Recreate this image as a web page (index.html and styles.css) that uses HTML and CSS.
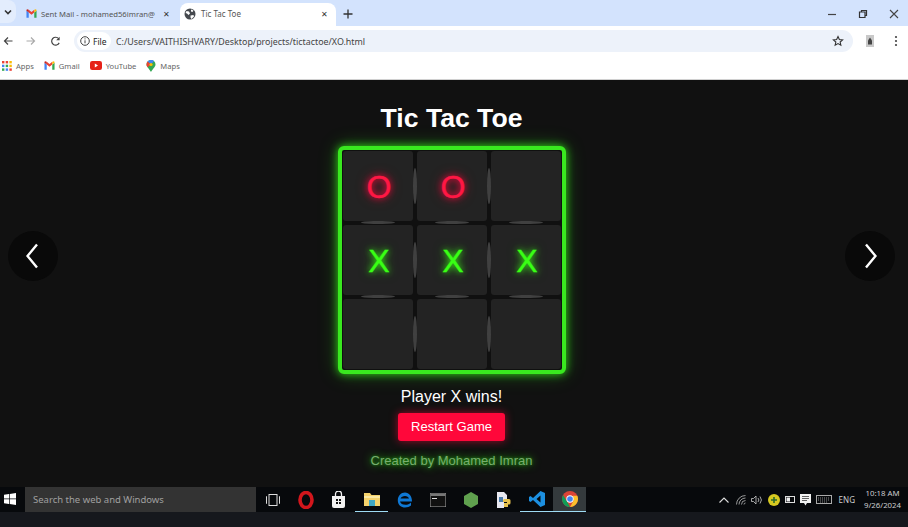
FILE: index.html
```html
<!DOCTYPE html>
<html lang="en">
<head>
  <meta charset="UTF-8">
  <meta name="viewport" content="width=device-width, initial-scale=1.0">
  <title>Tic Tac Toe</title>
  <link rel="stylesheet" href="styles.css">
</head>
<body>
  <div class="tabstrip">
    <div class="tab-search"><svg width="10" height="10" viewBox="0 0 10 10"><path d="M2 3.500l3 3 3-3" fill="none" stroke="#333" stroke-width="1.600"/></svg></div>
    <div class="tab tab-mail">
      <svg class="fav" width="11" height="11" viewBox="0 0 24 24"><path fill="#4285f4" d="M1 21h5V10L1 6z"/><path fill="#34a853" d="M18 21h5V6l-5 4z"/><path fill="#ea4335" d="M6 10l6 4.500 6-4.500V4l-6 4.500L6 4z"/><path fill="#c5221f" d="M1 6l5 4V4L3.500 3C2 2.500 1 4 1 6z"/><path fill="#fbbc04" d="M23 6l-5 4V4l2.500-1C22 2.500 23 4 23 6z"/></svg>
      <span class="tab-title">Sent Mail - mohamed56imran@</span>
      <span class="tab-x">✕</span>
    </div>
    <div class="tab tab-active">
      <svg class="fav" width="12" height="12" viewBox="0 0 24 24"><circle cx="12" cy="12" r="11" fill="#45494e"/><path fill="#fff" d="M5 6l5 1 2 4-3 3-3-3-3-1zM14 3l5 2-2 3-3-1zM13 15l6-1 1 3-5 5-2-3z"/></svg>
      <span class="tab-title">Tic Tac Toe</span>
      <span class="tab-x">✕</span>
    </div>
    <div class="tab-new">
      <svg width="10" height="10" viewBox="0 0 10 10"><path d="M5 .5v9M.5 5h9" stroke="#333" stroke-width="1.300"/></svg>
    </div>
    <div class="win-controls">
      <svg width="10" height="10" viewBox="0 0 10 10"><path d="M1 5.500h8" stroke="#444" stroke-width="1.200"/></svg>
      <svg width="10" height="10" viewBox="0 0 10 10"><path d="M1.500 3h5.500v5.500h-5.500zM3.500 3v-1.500h5v5h-1.500" fill="none" stroke="#333" stroke-width="1.200"/></svg>
      <svg width="10" height="10" viewBox="0 0 10 10"><path d="M1 1l8 8M9 1l-8 8" stroke="#444" stroke-width="1.100"/></svg>
    </div>
  </div>

  <div class="toolbar">
    <svg class="nav-btn" width="10" height="10" viewBox="0 0 10 10"><path d="M9.500 5h-8M5 1.500L1.500 5 5 8.500" fill="none" stroke="#444" stroke-width="1.200"/></svg>
    <svg class="nav-btn" width="10" height="10" viewBox="0 0 10 10"><path d="M.5 5h8M5 1.500L8.500 5 5 8.500" fill="none" stroke="#aaa" stroke-width="1.200"/></svg>
    <svg class="nav-btn" width="11" height="11" viewBox="0 0 12 12"><path d="M10 7.500A4.300 4.300 0 1 1 9.500 3" fill="none" stroke="#444" stroke-width="1.300"/><path d="M10.500 .8v3.700H6.800z" fill="#444"/></svg>
    <div class="omnibox">
      <div class="file-chip">
        <svg width="10" height="10" viewBox="0 0 10 10"><circle cx="5" cy="5" r="4.300" fill="none" stroke="#444"/><path d="M5 4.300v3M5 2.400v1" stroke="#444"/></svg>
        <span>File</span>
      </div>
      <span class="url">C:/Users/VAITHISHVARY/Desktop/projects/tictactoe/XO.html</span>
      <svg class="star" width="12" height="12" viewBox="0 0 24 24"><path d="M12 3l2.700 6 6.500.700-4.900 4.300 1.400 6.500L12 17.200 6.300 20.500l1.400-6.500L2.800 9.700 9.300 9z" fill="none" stroke="#333" stroke-width="2.200"/></svg>
    </div>
    <svg class="ext" width="8" height="12" viewBox="0 0 8 12"><rect width="8" height="12" fill="#c9c9c9"/><path d="M4 2.500l2 3v4H2v-4z" fill="#444"/></svg>
    <svg class="menu" width="4" height="12" viewBox="0 0 4 12"><circle cx="2" cy="2" r="1.100" fill="#444"/><circle cx="2" cy="6" r="1.100" fill="#444"/><circle cx="2" cy="10" r="1.100" fill="#444"/></svg>
  </div>

  <div class="bookmarks">
    <div class="bookmark">
      <svg width="10" height="10" viewBox="0 0 10 10">
        <rect width="2.400" height="2.400" fill="#ea4335"/><rect x="3.700" width="2.400" height="2.400" fill="#ea4335"/><rect x="7.400" width="2.400" height="2.400" fill="#fbbc04"/>
        <rect y="3.700" width="2.400" height="2.400" fill="#4285f4"/><rect x="3.700" y="3.700" width="2.400" height="2.400" fill="#34a853"/><rect x="7.400" y="3.700" width="2.400" height="2.400" fill="#fbbc04"/>
        <rect y="7.400" width="2.400" height="2.400" fill="#34a853"/><rect x="3.700" y="7.400" width="2.400" height="2.400" fill="#4285f4"/><rect x="7.400" y="7.400" width="2.400" height="2.400" fill="#ea4335"/>
      </svg>
      <span>Apps</span>
    </div>
    <div class="bookmark">
      <svg width="11" height="11" viewBox="0 0 24 24"><path fill="#4285f4" d="M1 21h5V10L1 6z"/><path fill="#34a853" d="M18 21h5V6l-5 4z"/><path fill="#ea4335" d="M6 10l6 4.500 6-4.500V4l-6 4.500L6 4z"/><path fill="#c5221f" d="M1 6l5 4V4L3.500 3C2 2.500 1 4 1 6z"/><path fill="#fbbc04" d="M23 6l-5 4V4l2.500-1C22 2.500 23 4 23 6z"/></svg>
      <span>Gmail</span>
    </div>
    <div class="bookmark">
      <svg width="12" height="9" viewBox="0 0 12 9"><rect width="12" height="9" rx="2.200" fill="#e62117"/><path d="M4.800 2.500L8 4.500 4.800 6.500z" fill="#fff"/></svg>
      <span>YouTube</span>
    </div>
    <div class="bookmark">
      <svg width="10" height="12" viewBox="0 0 10 12"><path d="M5 0a4.500 4.500 0 0 1 4.500 4.500C9.500 7 6.500 9 5 12 3.500 9 .5 7 .5 4.500A4.500 4.500 0 0 1 5 0z" fill="#34a853"/><path d="M1.500 1.500L5 4.500 8 1A4.500 4.500 0 0 0 5 0a4.500 4.500 0 0 0-3.500 1.500z" fill="#4285f4"/><path d="M.5 4.500c0 1 .5 2 1 2.700L5 4.500 1.500 1.500A4.500 4.500 0 0 0 .5 4.500z" fill="#ea4335"/><circle cx="5" cy="4.500" r="1.600" fill="#fbbc04"/></svg>
      <span>Maps</span>
    </div>
  </div>

  <main class="game">
    <h1 class="title">Tic Tac Toe</h1>
    <div class="board">
      <div class="cell cell-o">O</div>
      <div class="cell cell-o">O</div>
      <div class="cell"></div>
      <div class="cell cell-x">X</div>
      <div class="cell cell-x">X</div>
      <div class="cell cell-x">X</div>
      <div class="cell"></div>
      <div class="cell"></div>
      <div class="cell"></div>
    </div>
    <p class="status">Player X wins!</p>
    <button class="restart" type="button">Restart Game</button>
    <p class="credit">Created by Mohamed Imran</p>

    <div class="arrow arrow-left"><svg width="14" height="26" viewBox="0 0 14 26"><path d="M11 1.500L1.500 13 11 24.500" fill="none" stroke="#fff" stroke-width="2.400"/></svg></div>
    <div class="arrow arrow-right"><svg width="14" height="26" viewBox="0 0 14 26"><path d="M3 1.500L12.500 13 3 24.500" fill="none" stroke="#fff" stroke-width="2.400"/></svg></div>
  </main>

  <footer class="taskbar">
    <svg class="start" width="12" height="12" viewBox="0 0 12 12"><path fill="#fff" d="M0 1.800l5-.7v4.500H0zM5.700 1l6.300-1v5.600H5.700zM0 6.300h5v4.600l-5-.7zM5.700 6.300H12V12l-6.300-1z"/></svg>
    <div class="search">Search the web and Windows</div>
    <div class="task-icons">
      <div class="task"><svg width="14" height="12" viewBox="0 0 14 12"><rect x="3" y=".5" width="8" height="11" fill="none" stroke="#ddd"/><path d="M1 2.500H.5v7H1M13 2.500h.5v7H13" fill="none" stroke="#ddd"/></svg></div>
      <div class="task"><svg width="16" height="18" viewBox="0 0 16 18"><ellipse cx="8" cy="9" rx="6" ry="7.500" fill="none" stroke="#d2161c" stroke-width="3.600"/></svg></div>
      <div class="task"><svg width="15" height="17" viewBox="0 0 15 17"><path d="M1 5h13v10a2 2 0 0 1-2 2H3a2 2 0 0 1-2-2z" fill="#f2f2f2"/><path d="M4.500 5V3a3 3 0 0 1 6 0v2" fill="none" stroke="#f2f2f2" stroke-width="1.300"/><path fill="#111" d="M5 8h2v2H5zM8 8h2v2H8zM5 11h2v2H5zM8 11h2v2H8z"/></svg></div>
      <div class="task task-open"><svg width="16" height="14" viewBox="0 0 16 14"><path d="M0 1h6l1.500 2H16v11H0z" fill="#f4d26c"/><rect x="0" y="4" width="16" height="2" fill="#fbe9a4"/><rect x="5" y="8" width="6" height="6" fill="#3fa7c4"/></svg></div>
      <div class="task"><svg width="16" height="16" viewBox="0 0 16 16"><path d="M3 9.500h12C15 4 12 .5 8 .5 4 .5.800 4 .8 8.500c0 4.500 3.500 7 7.200 7 2.500 0 4.500-.8 6-2V10.500c-1.500 1.500-3.500 2.300-5.500 2.300-3 0-5-1.300-5.500-3.300zM3.500 6.500C4 5 6 4 8 4s3.500 1 4 2.500z" fill="#0f78d4"/></svg></div>
      <div class="task"><svg width="16" height="14" viewBox="0 0 16 14"><rect width="16" height="14" fill="#111" stroke="#aaa"/><rect x=".5" y=".5" width="15" height="2.500" fill="#777"/><path d="M2 5.500h5" stroke="#ddd"/></svg></div>
      <div class="task"><svg width="14" height="16" viewBox="0 0 14 16"><path d="M7 0l7 4v8l-7 4-7-4V4z" fill="#5fa04e"/></svg></div>
      <div class="task"><svg width="16" height="16" viewBox="0 0 16 16"><path d="M1 0h7l3 3v6H8v7H1z" fill="#e8e8f0"/><path d="M10 7h3a1.500 1.500 0 0 1 1.500 1.500V11a1.500 1.500 0 0 1-1.500 1.500h-1V15H8v-4h3v-1H7V8.500A1.500 1.500 0 0 1 8.500 7z" fill="#e7c24e"/><rect x="3" y="5" width="4" height="5" fill="#4b7cab"/></svg></div>
      <div class="task task-open"><svg width="16" height="16" viewBox="0 0 16 16"><path d="M11.500 0L16 2v12l-4.500 2L4 9l-2.500 2L0 10V6l1.500-1L4 7zM11.500 4.500L7.500 8l4 3.500z" fill="#1c8fe0"/></svg></div>
      <div class="task task-open task-active"><svg width="16" height="16" viewBox="0 0 16 16"><circle cx="8" cy="8" r="8" fill="#db4437"/><path d="M8 16a8 8 0 0 1-6.900-12L5 10.500 8 16z" fill="#0f9d58"/><path d="M15.300 4.700A8 8 0 0 1 8 16l3.400-6-.4-5.300z" fill="#fbc02d"/><circle cx="8" cy="8" r="3.700" fill="#fff"/><circle cx="8" cy="8" r="2.800" fill="#4285f4"/></svg></div>
    </div>
    <div class="tray">
      <svg class="tray-up" width="10" height="6" viewBox="0 0 10 6"><path d="M.5 5.500L5 1l4.500 4.500" fill="none" stroke="#ddd" stroke-width="1.100"/></svg>
      <svg width="10" height="10" viewBox="0 0 10 10"><path d="M.5 9.500A9 9 0 0 1 9.500 .5M3 9.500A6.500 6.500 0 0 1 9.500 3M5.500 9.500a4 4 0 0 1 4-4M8 9.500a1.500 1.500 0 0 1 1.500-1.500" fill="none" stroke="#bbb" stroke-width=".8"/></svg>
      <svg width="12" height="10" viewBox="0 0 12 10"><path d="M.5 3.500h2L5 1v8L2.500 6.500h-2z" fill="none" stroke="#ccc" stroke-width=".8"/><path d="M7 3a3 3 0 0 1 0 4M9 1.500a5.500 5.500 0 0 1 0 7" fill="none" stroke="#ccc" stroke-width=".8"/></svg>
      <svg width="12" height="12" viewBox="0 0 12 12"><circle cx="6" cy="6" r="6" fill="#d7c921"/><path d="M6 3v6M3 6h6" stroke="#2d6a2d" stroke-width="1.600"/></svg>
      <svg width="10" height="7" viewBox="0 0 10 7"><rect x=".5" y=".5" width="9" height="6" fill="none" stroke="#ddd"/><rect x="1.500" y="1.500" width="3.500" height="4" fill="#eee"/></svg>
      <svg width="11" height="12" viewBox="0 0 11 12"><path d="M0 0h11v9H7l-1.500 2.500L4 9H0z" fill="#f2f2f2"/><path d="M2 2.500h7M2 4.500h7M2 6.500h5" stroke="#222" stroke-width=".7"/></svg>
      <svg width="16" height="9" viewBox="0 0 16 9"><rect x=".5" y=".5" width="15" height="8" fill="none" stroke="#aaa"/><path d="M2 3h12M2 5h12M4 7h8" stroke="#aaa" stroke-dasharray="1 1" stroke-width=".8"/></svg>
      <span class="lang">ENG</span>
      <div class="clock"><span>10:18 AM</span><span>9/26/2024</span></div>
    </div>
  </footer>
</body>
</html>
```

FILE: styles.css
```css
* {
  box-sizing: border-box;
}

body {
  margin: 0;
  width: 908px;
  height: 527px;
  overflow: hidden;
  display: flex;
  flex-direction: column;
  font-family: "Liberation Sans", Arial, sans-serif;
  background-color: #111;
}

/* browser chrome */
.tabstrip {
  height: 26px;
  flex: none;
  display: flex;
  align-items: flex-end;
  background-color: #d3e3fd;
  font-family: "Noto Sans", sans-serif;
  font-size: 8px;
  color: #555;
}

.tab-search {
  width: 16px;
  height: 23px;
  margin-right: 2px;
  display: flex;
  align-items: center;
  justify-content: center;
  background-color: #e3edfd;
  border-radius: 0 8px 8px 0;
  align-self: flex-start;
}

.tab {
  width: 162px;
  height: 23px;
  padding: 0 10px 2px 8px;
  display: flex;
  align-items: center;
  gap: 5px;
}

.fav {
  flex: none;
}

.tab-mail {
  gap: 4px;
  font-size: 7.7px;
}

.tab-active {
  width: 156px;
  background-color: #fff;
  border-radius: 8px 8px 0 0;
  padding-left: 4px;
  padding-right: 8px;
}

.tab-title {
  flex: 1;
  white-space: nowrap;
}

.tab-x {
  font-size: 8px;
  color: #333;
}

.tab-new {
  width: 24px;
  height: 23px;
  padding-bottom: 2px;
  display: flex;
  align-items: center;
  justify-content: center;
}

.win-controls {
  margin-left: auto;
  height: 23px;
  padding: 0 9px 2px 0;
  display: flex;
  align-items: center;
  gap: 21px;
}

.toolbar {
  height: 30px;
  flex: none;
  display: flex;
  align-items: center;
  background-color: #fff;
  padding-left: 3px;
}

.nav-btn {
  margin-right: 13px;
}

.nav-btn:nth-child(2) {
  margin-right: 14px;
}

.omnibox {
  width: 779px;
  height: 22px;
  padding: 0 9px 0 3px;
  display: flex;
  align-items: center;
  background-color: #edf2fa;
  border-radius: 11px;
  font-family: "Noto Sans", sans-serif;
  font-size: 8.9px;
  color: #444;
}

.file-chip {
  width: 34px;
  height: 18px;
  display: flex;
  align-items: center;
  gap: 3px;
  padding-left: 3px;
  background-color: #fff;
  border-radius: 9px;
  color: #222;
  font-size: 8.5px;
}

.url {
  margin-left: 5px;
  flex: 1;
  white-space: nowrap;
}

.ext {
  margin-left: 13px;
}

.menu {
  margin-left: 20px;
}

.bookmarks {
  height: 24px;
  flex: none;
  display: flex;
  align-items: center;
  padding: 0 0 4px 2px;
  gap: 10px;
  background-color: #fff;
  border-bottom: 1px solid #d0d0d0;
  font-family: "Noto Sans", sans-serif;
  font-size: 7.6px;
  color: #666;
}

.bookmark {
  display: flex;
  align-items: center;
  gap: 4px;
}

/* the page itself */
.game {
  position: relative;
  flex: 1;
  display: flex;
  flex-direction: column;
  align-items: center;
  padding-right: 5px;
  background-color: #111;
  color: #fff;
}

.title {
  margin: 22px 0 12px;
  font-size: 26.6px;
  line-height: 32px;
  font-weight: bold;
}

.board {
  width: 228px;
  height: 228px;
  padding: 1px;
  display: grid;
  grid-template-columns: repeat(3, 70px);
  grid-template-rows: repeat(3, 70px);
  gap: 4px;
  background-color: #101010;
  border: 4px solid #39e81f;
  border-radius: 6px;
  box-shadow: 0 0 8px #2fd118, 0 0 20px rgba(57, 232, 31, 0.3);
}

.cell {
  position: relative;
  display: flex;
  align-items: center;
  justify-content: center;
  padding: 2px 0 0 3px;
  background-color: #232323;
  border-radius: 3px;
  font-size: 32px;
  line-height: 1;
}

.cell::before,
.cell::after {
  content: "";
  position: absolute;
  background-color: #404040;
  filter: blur(0.5px);
}

/* lighter worn patches on the grid lines */
.cell::before {
  top: 17px;
  bottom: 17px;
  right: -4px;
  width: 4px;
  border-radius: 2px / 50%;
}

.cell::after {
  left: 18px;
  right: 18px;
  bottom: -3px;
  height: 3px;
  border-radius: 50% / 2px;
}

.cell:nth-child(3n)::before {
  display: none;
}

.cell:nth-child(n+7)::after {
  display: none;
}

.cell-o {
  color: #ff1744;
  -webkit-text-stroke: 0.4px #ff1744;
  text-shadow: 0 0 6px #ff073a, 0 0 12px rgba(255, 7, 58, 0.6);
}

.cell-x {
  color: #39ff14;
  -webkit-text-stroke: 0.4px #39ff14;
  text-shadow: 0 0 6px #39ff14, 0 0 12px rgba(57, 255, 20, 0.6);
}

.status {
  margin: 13px 0 6px;
  font-size: 16px;
  line-height: 20px;
}

.restart {
  width: 107px;
  height: 28px;
  padding: 0 0 2px;
  border: none;
  border-radius: 3px;
  background-color: #ff073a;
  color: #fff;
  font-family: inherit;
  font-size: 13px;
  box-shadow: 0 0 8px rgba(255, 7, 58, 0.6);
}

.credit {
  margin: 12px 0 0;
  font-size: 13px;
  line-height: 16px;
  color: #78ad6e;
  text-shadow: 0 0 8px #2fd118, 0 0 3px #1f8f10;
}

.arrow {
  position: absolute;
  top: 151px;
  width: 50px;
  height: 50px;
  display: flex;
  align-items: center;
  justify-content: center;
  background-color: #090909;
  border-radius: 50%;
}

.arrow-left {
  left: 8px;
}

.arrow-right {
  right: 13px;
}

/* windows taskbar */
.taskbar {
  height: 40px;
  flex: none;
  display: flex;
  align-items: flex-start;
  background-color: #07090c;
  border-bottom: 15px solid #16181d;
  font-family: "Noto Sans", sans-serif;
  color: #ccc;
}

.start {
  margin: 6px 9px 0 4px;
  flex: none;
}

.search {
  width: 231px;
  height: 25px;
  padding-left: 8px;
  line-height: 25px;
  background-color: #333;
  color: #a0a0a0;
  font-size: 9.5px;
}

.task-icons {
  display: flex;
}

.task {
  width: 33px;
  height: 25px;
  display: flex;
  align-items: center;
  justify-content: center;
}

.task-open {
  border-bottom: 1px solid #9fdcf5;
}

.task-active {
  background-color: #343a3d;
}

.tray {
  margin-left: auto;
  height: 25px;
  padding-right: 7px;
  display: flex;
  align-items: center;
  gap: 5px;
}

.tray-up {
  margin-right: 2px;
}

.lang {
  font-size: 8px;
  margin: 0 4px 0 2px;
}

.clock {
  display: flex;
  flex-direction: column;
  align-items: center;
  margin-top: -1px;
  font-size: 7.8px;
  line-height: 12px;
}
```
